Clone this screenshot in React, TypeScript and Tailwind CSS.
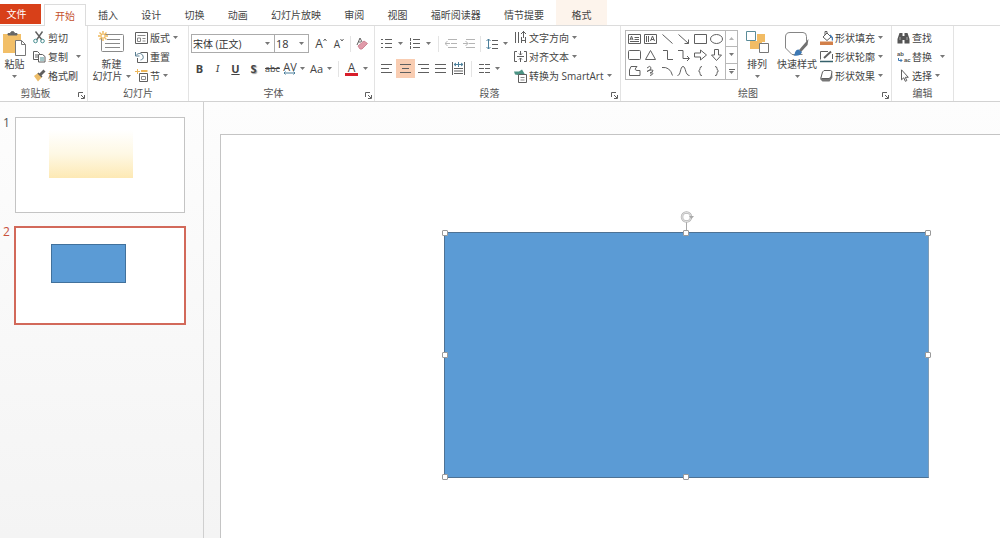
import React from "react";

type Kids = { children?: React.ReactNode };

const ink = "#5f5f5f";

function Svg({ w, h, children }: { w: number; h: number } & Kids) {
  return (
    <svg width={w} height={h} viewBox={`0 0 ${w} ${h}`} fill="none" stroke={ink} strokeWidth="1" className="shrink-0" aria-hidden="true">
      {children}
    </svg>
  );
}

function Caret() {
  return (
    <svg width="5" height="3" viewBox="0 0 5 3" className="shrink-0" aria-hidden="true">
      <path d="M0 0h5L2.5 3z" fill="#777" />
    </svg>
  );
}

function Launcher({ name }: { name: string }) {
  return (
    <button aria-label={name} className="flex h-4 w-3 shrink-0 items-center justify-center pt-1">
      <Svg w={7} h={7}>
        <path d="M.5 5V.5H5M3 3l3 3M6.500 3v3.500H3" />
      </Svg>
    </button>
  );
}

function Group({ label, className, launcher, children }: { label: string; className: string; launcher?: boolean } & Kids) {
  return (
    <section aria-label={label} className={`flex shrink-0 flex-col border-r border-[#e3e3e3] ${className}`}>
      <div className="flex h-[60px] items-start">{children}</div>
      <div className="flex h-4 items-center">
        <span className={`flex-1 text-center text-[#555] ${launcher ? "pl-1 pr-2" : ""}`}>{label}</span>
        {launcher && <Launcher name={`${label}设置`} />}
      </div>
    </section>
  );
}

function Item({ icon, text, caret, wide }: { icon: React.ReactNode; text: string; caret?: boolean; wide?: boolean }) {
  return (
    <button className="flex h-[19px] items-center whitespace-nowrap">
      <span className="flex w-[15px] shrink-0 items-center">{icon}</span>
      <span>{text}</span>
      {caret && <span className={wide ? "ml-2" : "ml-[3px]"}><Caret /></span>}
    </button>
  );
}

function Big({ icon, line1, line2, className }: { icon: React.ReactNode; line1: string; line2?: string; className: string }) {
  return (
    <button className={`flex shrink-0 flex-col items-center pt-[5px] leading-3 whitespace-nowrap ${className}`}>
      <span className="flex h-[27px] items-start">{icon}</span>
      <span>{line1}</span>
      <span className="flex h-3 items-center gap-[3px]">
        {line2}
        <Caret />
      </span>
    </button>
  );
}

function Tool({ label, className, children }: { label: string; className: string } & Kids) {
  return (
    <button aria-label={label} className={`flex h-[19px] shrink-0 items-center justify-center ${className}`}>
      {children}
    </button>
  );
}

const Rule = ({ className }: { className: string }) => <span className={`h-4 w-px shrink-0 bg-[#e4e4e4] ${className}`} />;

function Lines({ d }: { d: string }) {
  return (
    <Svg w={11} h={11}>
      <path d={d} />
    </Svg>
  );
}

const PasteIcon = (
  <Svg w={25} h={27}>
    <path d="M1 3h18v19H1z" fill="#f2bf68" stroke="none" />
    <path d="M6 4V2.500h2.500a2 2 0 0 1 4 0H15V4z" fill="#666" stroke="#666" />
    <path d="M13.500 9.500h6l4 4v11h-10z" fill="#fff" stroke="#777" />
    <path d="M19.500 9.500v4h4" stroke="#777" />
  </Svg>
);
const CutIcon = (
  <Svg w={13} h={13}>
    <path d="M2.500.5 9 9M9.500.5 3.500 9" strokeWidth="1.400" />
    <circle cx="2.500" cy="10" r="1.800" stroke="#4a8f92" />
    <circle cx="9.500" cy="10" r="1.800" stroke="#4a8f92" />
  </Svg>
);
const CopyIcon = (
  <Svg w={13} h={13}>
    <path d="M.5 1.500h4l2 2v6h-6zM2 5h3M2 7h3" />
    <path d="M5.500 4.500h4l2.500 2v5.500H5.500z" fill="#fff" />
    <path d="M7 8h4M7 10h4" stroke="#4a8f92" />
  </Svg>
);
const BrushIcon = (
  <Svg w={13} h={13}>
    <path d="m1 7 4-3 4 4-4 4.500z" fill="#edbd69" stroke="none" />
    <path d="m5 4 4 4M7 5l4-4M8 6l4-4" strokeWidth="1.500" />
  </Svg>
);
const NewSlideIcon = (
  <Svg w={27} h={25}>
    <rect x="3.500" y="3.500" width="22" height="17" rx="1" fill="#fff" stroke="#8a8a8a" />
    <path d="M9 8.500h13M7 12.500h15M7 16.500h15" stroke="#8a8a8a" />
    <path d="M5 0v10M0 5h10M1.500 1.500l7 7M8.500 1.500l-7 7" stroke="#efb95c" strokeWidth="1.400" />
    <circle cx="5" cy="5" r="1.500" fill="#fff" stroke="none" />
  </Svg>
);
const LayoutIcon = (
  <Svg w={13} h={12}>
    <path d="M.5.5h12v11H.5z" />
    <path d="M2.500 3.500h8M2.500 6h3v3.500h-3zM7.500 6.500h3M7.500 9h3" stroke="#8a8a8a" />
  </Svg>
);
const ResetIcon = (
  <Svg w={13} h={12}>
    <path d="M5.500 1.500h7v10H2.500V7" />
    <path d="M.5 1v4h4M1 4.500c2-3 6-2.500 7 .5s-1 3.500-2.500 4" stroke="#5b7f92" />
  </Svg>
);
const SectionIcon = (
  <Svg w={14} h={13}>
    <path d="M0 2.500h5M2.500 0v5" stroke="#edb75a" />
    <path d="M4.500 12.500v-8h8v8z" fill="#fff" />
    <path d="M6.500 7.500h4v3h-4z" stroke="#8a8a8a" />
    <path d="M6 2h6.500" stroke="#edb75a" strokeWidth="2" />
  </Svg>
);

const TextDirIcon = (
  <Svg w={13} h={13}>
    <path d="M1.500 1v11M4.500 1v11M7.500 6v6M11.500 6v6M7.500 9.500h4M9.500 0v7M7 3l2.500-2.500L12 3" />
  </Svg>
);
const AlignTextIcon = (
  <Svg w={14} h={13}>
    <path d="M3 1.500H.5v10H3M10 1.500h2.500v10H10M3 6.500h7M6.500 1v4M5 3.500 6.500 5 8 3.500M6.500 12V8M5 9.500 6.500 8 8 9.500" />
  </Svg>
);
const SmartArtIcon = (
  <Svg w={13} h={14}>
    <path d="M0 2.500h5L8 .5l3 5-4 1-6-1z" fill="#4b9384" stroke="none" />
    <path d="M4.500 5.500h8v8h-8z" fill="#fff" />
    <path d="M6.500 8.500h4M6.500 11h4" stroke="#8a8a8a" />
  </Svg>
);
const ArrangeIcon = (
  <Svg w={24} h={24}>
    <path d="M12 3h8v8h-3v7H5v-8h7z" fill="#f2bc64" stroke="none" />
    <path d="M1.500.5h9v9h-9z" fill="#fff" stroke="#5b8c99" />
    <path d="M14.500 12.500h9v9h-9z" fill="#fff" stroke="#777" />
  </Svg>
);
const QuickStyleIcon = (
  <Svg w={26} h={27}>
    <path d="M18.500 23.500H8L1.500 17V6q0-4.500 4.500-4.500h13q3.500 0 3.500 4v5" fill="#fff" stroke="#858585" />
    <path d="m24.500 8-1 6-6.500 7-2-2z" fill="#707070" stroke="none" />
    <path d="M14.500 18.500 18 21q-2 5-9 3.500 2-.5 2-3 1-3 3.500-3z" fill="#3c78b4" stroke="none" />
  </Svg>
);
const FillIcon = (
  <Svg w={13} h={14}>
    <path d="m3 6 4-4 4 4-4 3.500zM5 4V.5h2V3" fill="#fff" />
    <path d="m10 4 2.500 3v2.500" stroke="#3c78b4" strokeWidth="1.500" />
    <path d="M0 10.500h13V14H0z" fill="#d2804a" stroke="none" />
  </Svg>
);
const OutlineIcon = (
  <Svg w={13} h={13}>
    <path d="M8 1.500H.5v8M12.500 4v5" />
    <path d="m4 8 7-6.500" strokeWidth="1.800" />
    <path d="M0 11.500h13" stroke="#35606b" strokeWidth="1.500" />
  </Svg>
);
const EffectIcon = (
  <Svg w={13} h={13}>
    <path d="m12 3 .5 5.500-3 4H2.500L0 10l1.500-3 6 2z" fill="#777" stroke="none" />
    <path d="M4 1.500h6.500l1.500 1-1 5.500-2 1.500H2L1 8.500 2.500 3z" fill="#fff" />
  </Svg>
);
const FindIcon = (
  <Svg w={13} h={12}>
    <path d="M2.500 1h3v3h2V1h3l2 6v4.500H7.500V8h-2v3.500H.5V7z" fill="#555" stroke="none" />
    <path d="M3 5v3M10 5v3" stroke="#aaa" />
  </Svg>
);
const ReplaceIcon = (
  <svg width="14" height="15" viewBox="0 0 14 15" className="shrink-0" aria-hidden="true">
    <text x="0" y="7" fontSize="6" fontWeight="600" fill="#555" fontFamily="Liberation Sans">ab</text>
    <text x="7" y="13" fontSize="6" fontWeight="600" fill="#555" fontFamily="Liberation Sans">ac</text>
    <path d="M1.500 9v2.500H5M3.500 10 5 11.500 3.500 13" fill="none" stroke="#3c78b4" />
  </svg>
);
const SelectIcon = (
  <Svg w={13} h={13}>
    <path d="M4.500.8v10l2.300-2 1.500 3.500 1.500-.7-1.500-3.300h3z" fill="#fff" />
  </Svg>
);

const shapes: [string, React.ReactNode][] = [
  ["横排文本框", <><path d="M.5 1.500h12v9H.5zM6.500 4.500h4.500M6.500 6.500h4.500M2 8.500h9" /><path d="m2 7 1.500-4L5 7M2.500 6h2" /></>],
  ["竖排文本框", <><path d="M.5 1.500h12v9H.5zM2.500 3v6M4.500 3v6" /><path d="m6.500 8 2-5 2 5M7 6.500h3" /></>],
  ["直线", <path d="m1.500 1.500 10 9" />],
  ["箭头", <path d="m1.500 1.500 10 9M11.500 6.500v4h-4" />],
  ["矩形", <path d="M.5 1.500h12v9H.5z" />],
  ["椭圆", <ellipse cx="6.500" cy="6" rx="6" ry="4.500" />],
  ["圆角矩形", <rect x=".5" y="1.500" width="12" height="9" rx="1" />],
  ["三角形", <path d="m6.500 1.500 5 9h-10z" />],
  ["肘形连接符", <path d="M2 1.500h4.500v9H12" />],
  ["肘形箭头", <path d="M1 1.500h5v8h6M10 7l2.500 2.500L10 12" />],
  ["右箭头", <path d="M.5 4h6V1l6 5-6 5V8h-6z" />],
  ["下箭头", <path d="M4.500.5h4V6h3l-5 5.500L1.500 6h3z" />],
  ["任意多边形", <path d="M3 1.500h6Q5.500 5 9 5.500h3v5H1.500V5z" />],
  ["自由曲线", <path d="M3 3q3-3 4-.5t-4 4q2-2 5-1.500t-2 3q3-.5 3 .5t-3 2" />],
  ["弧形", <path d="M1 2.500q8-1 10.500 8" />],
  ["曲线", <path d="M.5 10.500C4 10.500 3 1.500 6 1.500s2 9 6.500 9" />],
  ["左大括号", <path d="M8 1.500q-2 0-2 2T4.500 6Q6 6 6 8.500t2 2" />],
  ["右大括号", <path d="M5 1.500q2 0 2 2T8.500 6Q7 6 7 8.500t-2 2" />],
];

const tabs = ["插入", "设计", "切换", "动画", "幻灯片放映", "审阅", "视图", "福昕阅读器", "情节提要"];

function TabBar() {
  return (
    <nav className="flex h-[26px] items-end border-b border-[#dcdcdc] text-[#444]">
      <button className="mb-px h-5 w-[41px] shrink-0 bg-[#d84019] pr-2 text-white">文件</button>
      <button className="-mb-px ml-[3px] h-[22px] w-[42px] shrink-0 border border-b-0 border-[#dcdcdc] bg-white text-[#c4502c]">开始</button>
      <div className="ml-3 flex h-[21px] w-[446px] shrink-0 items-center justify-between">
        {tabs.map((t) => (
          <button key={t}>{t}</button>
        ))}
      </div>
      <button className="ml-3 flex h-[25px] w-[51px] shrink-0 items-center justify-center bg-[#fdf4ec] pt-1">格式</button>
    </nav>
  );
}

function Picker({ label, value, className }: { label: string; value: string; className: string }) {
  return (
    <label className={`flex h-[19px] shrink-0 items-center border border-[#ababab] bg-white pr-1 ${className}`}>
      <select aria-label={label} defaultValue={value} className="h-full min-w-0 flex-1 appearance-none bg-transparent pl-px text-[#333]">
        <option>{value}</option>
      </select>
      <Caret />
    </label>
  );
}

function FontGroup() {
  return (
    <Group label="字体" launcher className="w-[186px]">
      <div className="flex flex-col gap-[6px] pt-2">
        <div className="flex items-center pl-0.5">
          <Picker label="字体" value="宋体 (正文)" className="w-[84px]" />
          <Picker label="字号" value="18" className="-ml-px w-[35px] text-[11px]" />
          <Tool label="增大字号" className="ml-1 w-4">
            <span className="text-[12px]">A</span>
            <Svg w={4} h={12}><path d="m.5 3 1.500-2 1.500 2" /></Svg>
          </Tool>
          <Tool label="减小字号" className="ml-[2px] w-4">
            <span className="text-[10px]">A</span>
            <Svg w={4} h={12}><path d="m.5 1 1.500 2 1.500-2" /></Svg>
          </Tool>
          <Rule className="ml-[3px]" />
          <Tool label="清除格式" className="ml-[5px] w-3">
            <Svg w={12} h={13}>
              <path d="m1 8 3-7 2 4M2.500 5H5" />
              <path d="m2 9 6-5 3.500 2.500L6 12H4z" fill="#e09aa9" stroke="#cf8494" />
            </Svg>
          </Tool>
        </div>
        <div className="flex items-center pl-[3px] text-[11px]">
          <Tool label="加粗" className="w-[15px] font-bold">B</Tool>
          <Tool label="倾斜" className="ml-[3px] w-[15px] font-serif italic">I</Tool>
          <Tool label="下划线" className="ml-[3px] w-[15px] font-bold underline">U</Tool>
          <Tool label="文字阴影" className="ml-[3px] w-[15px] font-bold text-shadow-[1px_1px_1px_#999]">S</Tool>
          <Tool label="删除线" className="ml-[3px] w-[17px] text-[9px] line-through">abc</Tool>
          <Tool label="字符间距" className="ml-[2px] w-[22px] gap-[3px]">
            <span className="flex flex-col items-center leading-[9px]">
              AV
              <Svg w={13} h={4}><path d="M1 2h11M2.500.5 1 2l1.500 1.500M10.500.5 12 2l-1.500 1.500" stroke="#4b7f9b" /></Svg>
            </span>
            <Caret />
          </Tool>
          <Tool label="更改大小写" className="ml-[5px] w-[22px] gap-1">Aa<Caret /></Tool>
          <Rule className="ml-1.5" />
          <Tool label="字体颜色" className="ml-[6px] w-[23px] gap-[5px]">
            <span className="flex w-[13px] flex-col items-center border-b-3 border-[#d81e2a] text-[12px] leading-[11px]">A</span>
            <Caret />
          </Tool>
        </div>
      </div>
    </Group>
  );
}

function ParagraphGroup() {
  return (
    <Group label="段落" launcher className="w-[246px]">
      <div className="flex w-[139px] shrink-0 flex-col gap-[6px] pt-2 pl-1.5">
        <div className="flex items-center">
          <Tool label="项目符号" className="w-[22px] gap-[6px]">
            <Lines d="M4 1.500h7M4 5.500h7M4 9.500h7M0 1.500h2M0 5.500h2M0 9.500h2" />
            <Caret />
          </Tool>
          <Tool label="编号" className="ml-1.5 w-[22px] gap-[6px]">
            <Lines d="M4 1.500h7M4 5.500h7M4 9.500h7M1.500 0v3M1.500 4v3M1.500 8v3" />
            <Caret />
          </Tool>
          <Rule className="ml-[7px]" />
          <Tool label="减少缩进" className="ml-[5px] w-[13px]">
            <Svg w={12} h={11}><path d="M3 1.500h9M6 5.500h6M3 9.500h9M0 5.500h5M2.500 3 0 5.500 2.500 8" stroke="#b5b5b5" /></Svg>
          </Tool>
          <Tool label="增加缩进" className="ml-[5px] w-[13px]">
            <Svg w={12} h={11}><path d="M3 1.500h9M6 5.500h6M3 9.500h9M0 5.500h5M2.500 3 5 5.500 2.500 8" stroke="#b5b5b5" /></Svg>
          </Tool>
          <Rule className="ml-[5px]" />
          <Tool label="行距" className="ml-[5px] w-[22px] gap-[5px]">
            <Svg w={12} h={12}>
              <path d="M6 2.500h6M6 6.500h6M6 10.500h6" />
              <path d="M2.500 1v10M.5 3l2-2 2 2M.5 9l2 2 2-2" stroke="#4b7f9b" />
            </Svg>
            <Caret />
          </Tool>
        </div>
        <div className="flex items-center">
          <Tool label="左对齐" className="w-[11px]"><Lines d="M0 1.500h11M0 5.500h8M0 9.500h11" /></Tool>
          <Tool label="居中" className="ml-1 w-[19px] bg-[#f9cdb2]"><Lines d="M0 1.500h11M2 5.500h7M0 9.500h11" /></Tool>
          <Tool label="右对齐" className="ml-[3px] w-[11px]"><Lines d="M0 1.500h11M3 5.500h8M0 9.500h11" /></Tool>
          <Tool label="两端对齐" className="ml-[6px] w-[11px]"><Lines d="M0 1.500h11M0 5.500h11M0 9.500h11" /></Tool>
          <Tool label="分散对齐" className="ml-[6px] w-[13px]">
            <Svg w={13} h={13}>
              <path d="M.5 0v13M12.500 0v13M2 6.500h9M2 9h9M2 11.500h9" />
              <path d="M2 2.500h9M4 1 2 2.500 4 4M9 1l2 1.500L9 4M6.500 0v5" stroke="#4b7f9b" />
            </Svg>
          </Tool>
          <Rule className="ml-1.5" />
          <Tool label="分栏" className="ml-1.5 w-[22px] gap-[5px]">
            <Lines d="M0 1.500h5M0 5.500h5M0 9.500h5M6 1.500h5M6 5.500h5M6 9.500h5" />
            <Caret />
          </Tool>
        </div>
      </div>
      <div className="flex flex-col pt-0.5">
        <Item icon={TextDirIcon} text="文字方向" caret />
        <Item icon={AlignTextIcon} text="对齐文本" caret />
        <Item icon={SmartArtIcon} text="转换为 SmartArt" caret />
      </div>
    </Group>
  );
}

function ShapeGallery() {
  return (
    <div className="mt-1 ml-1 flex h-[50px] w-[113px] shrink-0 border border-[#b8b8b8] bg-white">
      <div className="grid flex-1 grid-cols-6 grid-rows-3">
        {shapes.map(([name, art]) => (
          <button key={name} aria-label={name} className="flex items-center justify-center">
            <Svg w={13} h={12}>{art}</Svg>
          </button>
        ))}
      </div>
      <div className="flex w-3 flex-col divide-y divide-[#b8b8b8] border-l border-[#b8b8b8]">
        <button aria-label="向上滚动" className="flex flex-1 items-center justify-center">
          <svg width="5" height="3" viewBox="0 0 5 3" aria-hidden="true"><path d="M0 3h5L2.500 0z" fill="#b5b5b5" /></svg>
        </button>
        <button aria-label="向下滚动" className="flex flex-1 items-center justify-center"><Caret /></button>
        <button aria-label="更多形状" className="flex flex-1 flex-col items-center justify-center gap-px">
          <span className="h-px w-[6px] bg-[#666]" />
          <Caret />
        </button>
      </div>
    </div>
  );
}

function Ribbon() {
  return (
    <div className="flex h-[76px] overflow-hidden border-b border-[#d2d2d2]">
      <Group label="剪贴板" launcher className="w-[88px]">
        <Big icon={PasteIcon} line1="粘贴" className="w-[33px] pr-1" />
        <div className="flex flex-col pt-0.5">
          <Item icon={CutIcon} text="剪切" />
          <Item icon={CopyIcon} text="复制" caret wide />
          <Item icon={BrushIcon} text="格式刷" />
        </div>
      </Group>
      <Group label="幻灯片" className="w-[101px]">
        <Big icon={NewSlideIcon} line1="新建" line2="幻灯片" className="w-[47px]" />
        <div className="flex flex-col pt-0.5">
          <Item icon={LayoutIcon} text="版式" caret />
          <Item icon={ResetIcon} text="重置" />
          <Item icon={SectionIcon} text="节" caret />
        </div>
      </Group>
      <FontGroup />
      <ParagraphGroup />
      <Group label="绘图" launcher className="w-[271px]">
        <ShapeGallery />
        <Big icon={ArrangeIcon} line1="排列" className="w-[38px]" />
        <Big icon={QuickStyleIcon} line1="快速样式" className="w-[42px]" />
        <div className="ml-0.5 flex flex-col pt-0.5">
          <Item icon={FillIcon} text="形状填充" caret />
          <Item icon={OutlineIcon} text="形状轮廓" caret />
          <Item icon={EffectIcon} text="形状效果" caret />
        </div>
      </Group>
      <Group label="编辑" className="w-[62px]">
        <div className="flex flex-col pt-0.5 pl-[5px]">
          <Item icon={FindIcon} text="查找" />
          <Item icon={ReplaceIcon} text="替换" caret wide />
          <Item icon={SelectIcon} text="选择" caret />
        </div>
      </Group>
    </div>
  );
}

function Thumbnails() {
  return (
    <aside aria-label="幻灯片缩略图" className="flex w-[204px] shrink-0 flex-col gap-[13px] border-r border-[#cfcfcf] pt-[15px] pl-[3px] text-[12px] leading-3">
      <button className="flex items-start text-[#555]">
        <span className="w-3 text-left">1</span>
        <span className="flex h-[96px] w-[170px] border border-[#c4c4c4] bg-white pt-3 pl-[33px]">
          <span className="h-12 w-[84px] bg-linear-to-b from-white via-[#fef8e4] to-[#fde9b4]" />
        </span>
      </button>
      <button className="flex items-start text-[#c8503c]">
        <span className="w-[11px] text-left">2</span>
        <span className="flex h-[99px] w-[172px] border-2 border-[#d2695a] bg-white pt-4 pl-[35px]">
          <span className="h-[39px] w-[75px] border border-[#41719c] bg-[#5b9bd5]" />
        </span>
      </button>
    </aside>
  );
}

const handles = [
  "-left-[3px] -top-[3px]",
  "left-1/2 -ml-1 -top-[3px]",
  "-right-[3px] -top-[3px]",
  "-left-[3px] top-1/2 -mt-[3px]",
  "-right-[3px] top-1/2 -mt-[3px]",
  "-left-[3px] -bottom-[3px]",
  "left-1/2 -ml-1 -bottom-[3px]",
];

function Canvas() {
  return (
    <main className="flex min-w-0 flex-1 overflow-hidden pt-8 pl-4">
      <div className="relative flex-1 border-t border-l border-[#c4c4c4] bg-white">
        <div className="absolute top-[97px] left-[223px] h-[246px] w-[485px] border border-[#4e7294] border-r-[#7d9cb8] bg-[#5b9bd5]">
          <div className="absolute -top-[23px] left-1/2 -ml-[7px]">
            <svg width="14" height="22" viewBox="0 0 14 22" fill="none" aria-hidden="true">
              <path d="M6.500 12v10" stroke="#a8a8a8" />
              <circle cx="6.500" cy="7" r="4.500" stroke="#b4b4b4" strokeWidth="2.500" />
              <circle cx="6.500" cy="7" r="4.500" stroke="#f4f4f4" strokeWidth=".8" />
              <path d="M9 6h5l-2.500 3z" fill="#a8a8a8" />
            </svg>
          </div>
          {handles.map((h) => (
            <span key={h} className={`absolute h-[6px] w-[6px] rounded-[1px] border border-[#9a9a9a] bg-white ${h}`} />
          ))}
        </div>
      </div>
    </main>
  );
}

export default function App() {
  return (
    <div lang="zh-CN" className="flex min-h-screen flex-col bg-white font-['Open_Sans','Noto_Sans_CJK_SC',sans-serif] text-[10px] leading-4 text-[#444]">
      <TabBar />
      <Ribbon />
      <div className="flex flex-1 bg-linear-to-b from-[#fdfdfd] to-[#f4f4f4]">
        <Thumbnails />
        <Canvas />
      </div>
    </div>
  );
}
